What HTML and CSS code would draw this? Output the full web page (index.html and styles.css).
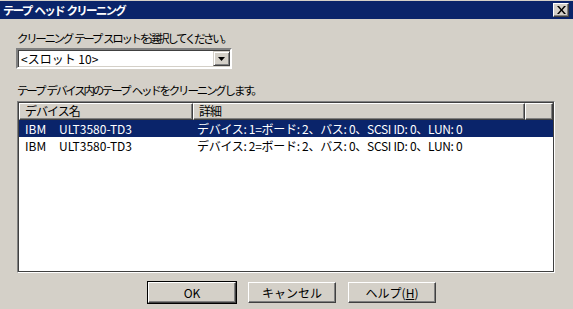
FILE: index.html
```html
<!DOCTYPE html>
<html lang="ja">
<head>
<meta charset="utf-8">
<link rel="stylesheet" href="styles.css">
</head>
<body>
<div class="window">
  <div class="titlebar">
    <span class="title">テープ ヘッド クリーニング</span>
    <span class="close"><svg width="9" height="8" viewBox="0 0 9 8"><path d="M0 0h2l2.5 3 2.5-3h2L5.5 4 9 8H7L4.5 5 2 8H0l3.5-4z" fill="#000"/></svg></span>
  </div>
  <div class="content">
    <div class="label first">クリーニング テープ スロットを選択してください。</div>
    <div class="combo">
      <div class="combo-text">&lt;スロット 10&gt;</div>
      <div class="combo-btn"><svg width="7" height="4" viewBox="0 0 7 4"><path d="M0 0h7L3.5 4z" fill="#000"/></svg></div>
    </div>
    <div class="label second">テープ デバイス内のテープ ヘッドをクリーニングします。</div>
    <div class="list">
      <div class="header">
        <div class="hcell c1">デバイス名</div>
        <div class="hcell c2">詳細</div>
        <div class="hcell c3"></div>
      </div>
      <div class="row selected">
        <div class="cell c1"><span class="vendor">IBM</span><span>ULT3580-TD3</span></div>
        <div class="cell c2">デバイス: 1=ボード: 2、バス: 0、SCSI ID: 0、LUN: 0</div>
      </div>
      <div class="row">
        <div class="cell c1"><span class="vendor">IBM</span><span>ULT3580-TD3</span></div>
        <div class="cell c2">デバイス: 2=ボード: 2、バス: 0、SCSI ID: 0、LUN: 0</div>
      </div>
    </div>
    <div class="buttons">
      <button class="btn default">OK</button>
      <button class="btn">キャンセル</button>
      <button class="btn">ヘルプ(<u>H</u>)</button>
    </div>
  </div>
</div>
</body>
</html>
```
FILE: styles.css
```css
html, body {
  margin: 0;
  padding: 0;
  background: #D4D0C8;
}
body {
  font-family: "Noto Sans CJK JP", "DejaVu Sans", sans-serif;
  font-size: 12px;
  color: #000;
  width: 573px;
  height: 309px;
  overflow: hidden;
}
.window {
  padding-top: 1px;
}
.titlebar {
  height: 18px;
  background: #0A246A;
  display: flex;
  align-items: center;
  justify-content: space-between;
  padding: 0 4px 0 3px;
}
.title {
  color: #fff;
  font-weight: bold;
  font-size: 11.5px;
  line-height: 18px;
  letter-spacing: -1.75px;
  word-spacing: 2px;
}
.close {
  width: 16px;
  height: 14px;
  box-sizing: border-box;
  background: #D4D0C8;
  border: 1px solid;
  border-color: #fff #404040 #404040 #fff;
  box-shadow: inset -1px -1px 0 #808080;
  display: flex;
  align-items: center;
  justify-content: center;
}
.content {
  padding: 0 18px 0 16px;
}
.label {
  line-height: 14px;
  padding-left: 1px;
  font-size: 11.5px;
  word-spacing: 2px;
}
.label.first {
  margin-top: 12px;
  letter-spacing: -2.35px;
}
.combo {
  margin-top: 3px;
  width: 216px;
  height: 21px;
  box-sizing: border-box;
  background: #fff;
  border: 2px solid;
  border-color: #808080 #fff #fff #808080;
  box-shadow: inset 1px 1px 0 #404040, inset -1px -1px 0 #D4D0C8;
  display: flex;
  align-items: center;
  justify-content: space-between;
}
.combo-text {
  padding-left: 3px;
  line-height: 15px;
}
.combo-btn {
  width: 17px;
  height: 15px;
  box-sizing: border-box;
  background: #D4D0C8;
  border: 1px solid;
  border-color: #D4D0C8 #404040 #404040 #D4D0C8;
  box-shadow: inset 1px 1px 0 #fff, inset -1px -1px 0 #808080;
  display: flex;
  align-items: center;
  justify-content: center;
}
.label.second {
  margin-top: 14px;
  letter-spacing: -2.2px;
}
.list {
  margin-top: 4px;
  margin-left: 1px;
  width: 538px;
  height: 172px;
  box-sizing: border-box;
  background: #fff;
  border: 1px solid;
  border-color: #808080 #fff #fff #808080;
  box-shadow: inset 1px 1px 0 #404040, inset -1px -1px 0 #404040;
  padding: 1px;
}
.header {
  display: flex;
  height: 17px;
}
.hcell {
  box-sizing: border-box;
  background: #D4D0C8;
  border: 1px solid;
  border-color: #fff #404040 #404040 #fff;
  box-shadow: inset -1px -1px 0 #808080;
  padding-left: 5px;
  line-height: 14px;
  letter-spacing: -1px;
}
.hcell.c1 { width: 174px; }
.hcell.c2 { width: 332px; }
.hcell.c3 { flex: 1; }
.row {
  display: flex;
  height: 17px;
  line-height: 17px;
}
.row.selected {
  background: #0A246A;
  color: #fff;
}
.cell.c1 {
  width: 173px;
  padding-left: 6px;
  box-sizing: border-box;
}
.vendor {
  display: inline-block;
  width: 34px;
}
.cell.c2 {
  padding-left: 5px;
  letter-spacing: -0.3px;
}
.buttons {
  display: flex;
  gap: 12px;
  margin-top: 9px;
  padding-left: 132px;
}
.btn {
  width: 88px;
  height: 21px;
  box-sizing: border-box;
  background: #D4D0C8;
  border: 1px solid;
  border-color: #fff #404040 #404040 #fff;
  box-shadow: inset -1px -1px 0 #808080;
  font-family: inherit;
  font-size: 12px;
  padding: 0;
  color: #000;
  line-height: 17px;
}
.btn.default {
  outline: 1px solid #000;
}
```
